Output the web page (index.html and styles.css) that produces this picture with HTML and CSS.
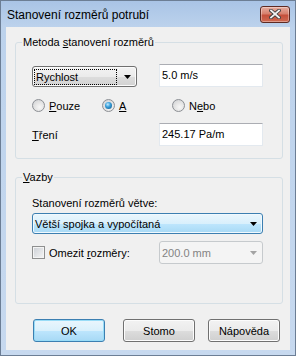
FILE: index.html
```html
<!DOCTYPE html>
<html lang="cs">
<head>
    <meta charset="UTF-8">
    <title>Stanovení rozměrů potrubí</title>
    <link rel="stylesheet" href="styles.css">
</head>
<body>
    <div class="window">
        <div class="titlebar">
            <span class="title">Stanovení rozměrů potrubí</span>
            <button class="btn-close" title="Zavřít">
                <svg width="12" height="10" viewBox="0 0 12 10">
                    <path d="M2 1.5L10 8.5M10 1.5L2 8.5" stroke="#3d3d3d" stroke-width="3.6" stroke-linecap="square"/>
                    <path d="M2 1.5L10 8.5M10 1.5L2 8.5" stroke="#f4f4f4" stroke-width="1.8" stroke-linecap="square"/>
                </svg>
            </button>
        </div>

        <div class="client">
            <!-- Metoda -->
            <fieldset class="group">
                <legend>Metoda <u>s</u>tanovení rozměrů</legend>
                <div class="group-body first">
                    <div class="row-grid">
                        <div class="combo focused">
                            <span class="combo-text"><span class="focus-rect">Rychlost</span></span>
                            <span class="arrow">
                                <svg width="7" height="4" viewBox="0 0 7 4"><path d="M0 0h7L3.5 4z" fill="#000"/></svg>
                            </span>
                        </div>
                        <div class="edit">5.0 m/s</div>
                    </div>
                    <div class="radios">
                        <label class="radio-item"><span class="radio"></span><span><u>P</u>ouze</span></label>
                        <label class="radio-item"><span class="radio checked"></span><span><u>A</u></span></label>
                        <label class="radio-item"><span class="radio"></span><span>N<u>e</u>bo</span></label>
                    </div>
                    <div class="row-grid friction">
                        <span class="label"><u>T</u>ření</span>
                        <div class="edit">245.17 Pa/m</div>
                    </div>
                </div>
            </fieldset>

            <!-- Vazby -->
            <fieldset class="group second">
                <legend><u>V</u>azby</legend>
                <div class="group-body">
                    <div class="label">Stanovení rozměrů větve:</div>
                    <div class="combo hot">
                        <span class="combo-text">Větší spojka a vypočítaná</span>
                        <span class="arrow">
                            <svg width="7" height="4" viewBox="0 0 7 4"><path d="M0 0h7L3.5 4z" fill="#000"/></svg>
                        </span>
                    </div>
                    <div class="row-grid limit">
                        <label class="check-item"><span class="checkbox"></span><span>Omezit <u>r</u>ozměry:</span></label>
                        <div class="combo disabled">
                            <span class="combo-text">200.0 mm</span>
                            <span class="arrow">
                                <svg width="7" height="4" viewBox="0 0 7 4"><path d="M0 0h7L3.5 4z" fill="#a3a3a3"/></svg>
                            </span>
                        </div>
                    </div>
                </div>
            </fieldset>

            <div class="buttons">
                <button class="btn default">OK</button>
                <button class="btn">Stomo</button>
                <button class="btn">Nápověda</button>
            </div>
        </div>
    </div>
</body>
</html>
```

FILE: styles.css
```css
html, body {
    margin: 0;
    padding: 0;
}
body {
    font-family: 'Liberation Sans', Arial, sans-serif;
    font-size: 11px;
    color: #000;
    background: #fff;
}
u { text-decoration: underline; text-underline-offset: 1px; }

/* Okno */
.window {
    width: 296px;
    height: 356px;
    box-sizing: border-box;
    border: 1px solid #6c7e95;
    padding: 0 5px 5px 5px;
    background: linear-gradient(#a9c4e6 0, #bcd2ec 26px, #c7d9ef 100%);
    display: flex;
    flex-direction: column;
}
.titlebar {
    height: 26px;
    display: flex;
    align-items: center;
    padding-left: 1px;
}
.title {
    font-size: 12px;
    color: #000;
    margin-top: 1px;
}
.btn-close {
    margin-left: auto;
    width: 30px;
    height: 17px;
    padding: 0;
    border: 1px solid #5e2a22;
    border-radius: 3px;
    background: linear-gradient(#e6ada0 0%, #d7806d 45%, #c5503b 55%, #cf6a52 100%);
    box-shadow: inset 0 0 0 1px rgba(255,255,255,0.35);
    display: flex;
    align-items: center;
    justify-content: center;
}
.btn-close svg { display: block; }

.client {
    flex: 1;
    background: #f0f0f0;
    padding: 8px 7px 0 9px;
    display: flex;
    flex-direction: column;
}

/* Skupiny */
.group {
    margin: 0;
    padding: 0;
    border: 1px solid #d5dfe5;
    border-radius: 3px;
}
.group legend {
    margin-left: 6px;
    padding: 0 1px;
    line-height: 14px;
}
.group.second { margin-top: 11px; }
.group-body {
    padding: 12px 19px 39px 16px;
}
.group-body.first {
    padding-top: 15px;
    padding-bottom: 12px;
}
.row-grid {
    display: grid;
    grid-template-columns: 127px 104px;
    align-items: center;
}
.label { line-height: 14px; }

/* Editační pole */
.edit {
    box-sizing: border-box;
    height: 23px;
    border: 1px solid #e3e9ef;
    border-top-color: #abadb3;
    background: #fff;
    padding: 0 2px;
    line-height: 20px;
    align-self: start;
}

/* Combo */
.combo {
    box-sizing: border-box;
    height: 21px;
    border: 1px solid #707070;
    border-radius: 3px;
    display: flex;
    align-items: center;
    background: linear-gradient(#f3f3f3 0%, #ebebeb 50%, #dddddd 51%, #d2d2d2 100%);
    box-shadow: inset 0 0 0 1px #fbfbfb;
}
.combo.focused {
    width: 105px;
    margin-top: 2px;
}
.combo-text {
    flex: 1;
    padding-left: 2px;
    white-space: nowrap;
}
.focus-rect {
    display: inline-block;
    width: 80px;
    height: 14px;
    line-height: 14px;
    padding-left: 1px;
    outline: 1px dotted #000;
}
.arrow {
    width: 7px;
    margin-right: 5px;
    display: flex;
}
.combo.hot {
    margin-top: 3px;
    border-color: #3c7fb1;
    background: linear-gradient(#eaf6fd 0%, #d9f0fc 50%, #bee6fd 51%, #a7d9f5 100%);
    box-shadow: inset 0 0 0 1px #f0f9fe;
}
.combo.disabled {
    height: 23px;
    border-color: #c6cacd;
    background: #f4f4f4;
    box-shadow: none;
    color: #838383;
}

/* Přepínače */
.radios {
    display: grid;
    grid-template-columns: 70px 70px auto;
    margin-top: 9px;
    height: 19px;
    align-items: center;
}
.radio-item, .check-item {
    display: flex;
    align-items: center;
    gap: 4px;
}
.radio {
    box-sizing: border-box;
    width: 13px;
    height: 13px;
    border-radius: 50%;
    border: 1px solid #8c8f94;
    background: radial-gradient(circle at 60% 65%, #f7f7f7 0%, #e3e3e3 50%, #c9ccd1 100%);
    position: relative;
}
.radio.checked::after {
    content: '';
    position: absolute;
    left: 2px;
    top: 2px;
    width: 7px;
    height: 7px;
    border-radius: 50%;
    background: radial-gradient(circle at 40% 35%, #c4ecff 0%, #3aa0db 40%, #0c4f80 100%);
}
.friction { margin-top: 8px; }

/* Zaškrtávací pole */
.limit { margin-top: 7px; }
.checkbox {
    box-sizing: border-box;
    width: 13px;
    height: 13px;
    border: 1px solid #8e8f8f;
    background: linear-gradient(135deg, #cbcfd5 0%, #f6f6f6 100%);
    box-shadow: inset 0 0 0 1px #f4f4f4;
}

/* Tlačítka */
.buttons {
    display: flex;
    margin-top: 15px;
    padding-left: 18px;
    gap: 18px;
}
.btn {
    flex: 0 0 72px;
    box-sizing: border-box;
    width: 72px;
    height: 23px;
    border: 1px solid #707070;
    border-radius: 3px;
    background: linear-gradient(#f2f2f2 0%, #ebebeb 50%, #dddddd 51%, #cfcfcf 100%);
    box-shadow: inset 0 0 0 1px #fcfcfc;
    font-family: inherit;
    font-size: 11px;
    color: #000;
    padding: 0;
}
.btn:last-child { margin-left: -5px; }
.btn.default {
    border-color: #3c7fb1;
    background: linear-gradient(#eaf6fd 0%, #d9f0fc 50%, #bee6fd 51%, #a7d9f5 100%);
    box-shadow: inset 0 0 0 1px #98dcf7;
}
```
